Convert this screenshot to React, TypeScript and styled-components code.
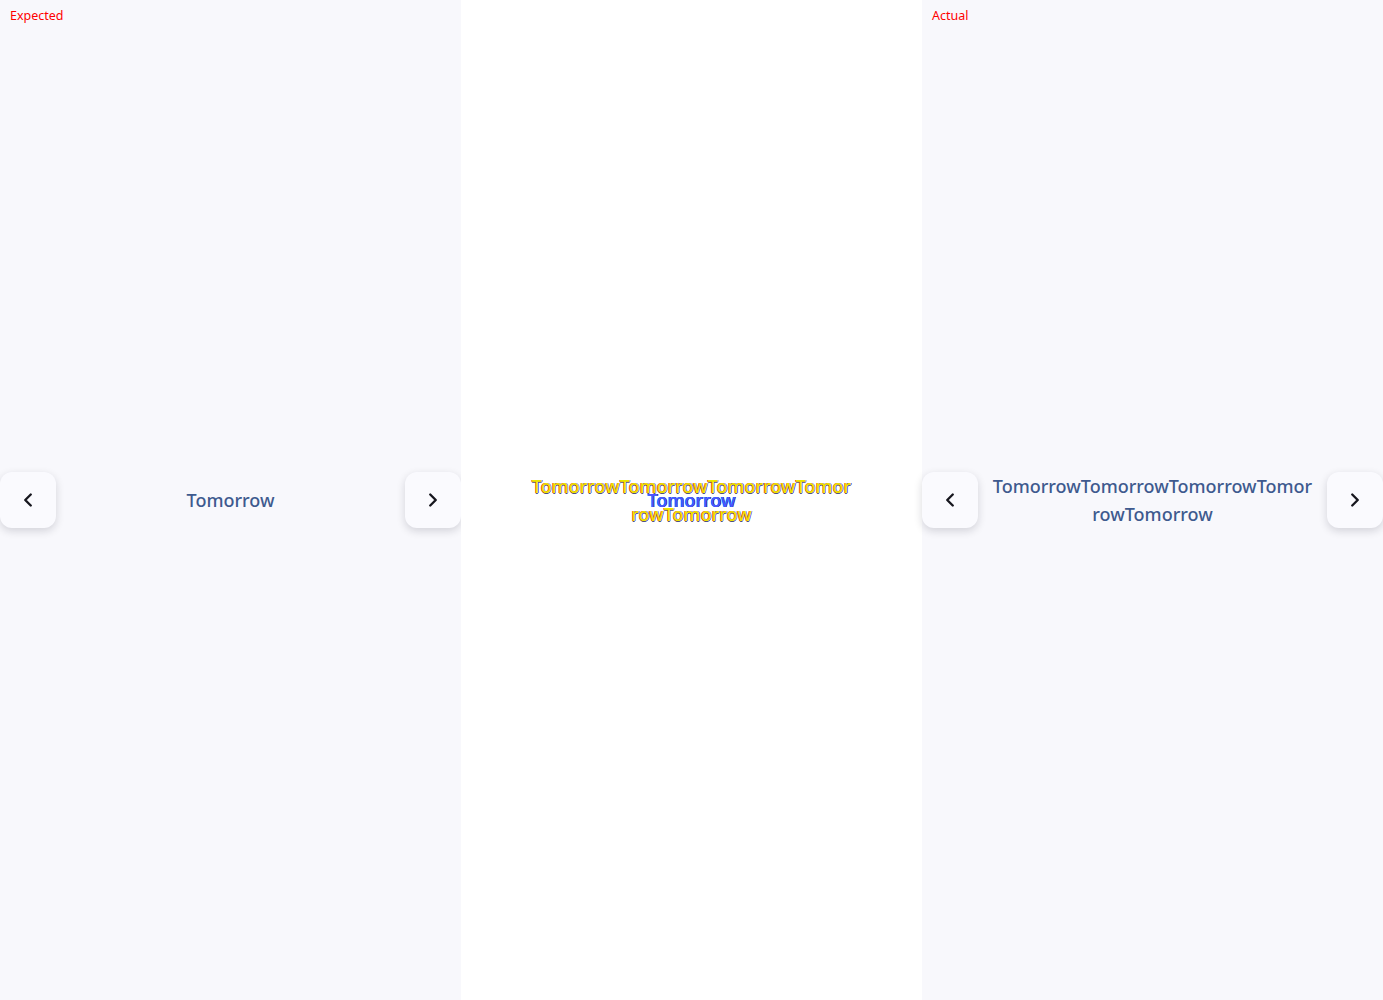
import React from "react";
import styled, { createGlobalStyle } from "styled-components";
import { ChevronLeft, ChevronRight } from "lucide-react";

const Global = createGlobalStyle`
  html, body { margin: 0; padding: 0; }
  body { font-family: "Noto Sans", "DejaVu Sans", sans-serif; background: #ffffff; }
  #root { width: 1383px; height: 1000px; }
`;

const Board = styled.div`
  display: grid;
  grid-template-columns: 461px 461px 461px;
  width: 1383px;
  height: 1000px;
  overflow: hidden;
`;

const Panel = styled.div<{ $tone: "soft" | "white" }>`
  position: relative;
  background: ${(p) => (p.$tone === "soft" ? "#f8f8fc" : "#ffffff")};
  display: flex;
  align-items: center;
  height: 1000px;
`;

const Label = styled.span`
  position: absolute;
  left: 10px;
  top: 7px;
  font-size: 12.5px;
  line-height: 18px;
  color: #ff0000;
`;

const Carousel = styled.div`
  display: flex;
  align-items: center;
  width: 100%;
`;

const NavButton = styled.button`
  flex: 0 0 56px;
  width: 56px;
  height: 56px;
  border: none;
  border-radius: 12px;
  background: #fafafe;
  box-shadow: 0 3px 8px rgba(20, 20, 40, 0.16);
  display: flex;
  align-items: center;
  justify-content: center;
  color: #16161e;
  padding: 0;
`;

const Caption = styled.div`
  flex: 1;
  text-align: center;
  font-size: 18px;
  font-weight: 500;
  line-height: 28px;
  color: #3e5a8e;
  word-break: break-all;
  padding: 0 14px;
  margin-top: -1px;
`;

const DiffArea = styled.div`
  position: relative;
  width: 100%;
  display: flex;
  justify-content: center;
  margin-top: -1px;
`;

const DiffText = styled.div`
  width: 321px;
  text-align: center;
  font-size: 18px;
  font-weight: 500;
  line-height: 28px;
  word-break: break-all;
  color: #e8e800;
  text-shadow: -0.6px 0 0 #ff3030, 0.6px 0 0 #3030ff, 0 0.6px 0 #505080;
`;

const DiffOverlay = styled.div`
  position: absolute;
  left: 0;
  right: 0;
  top: 14px;
  text-align: center;
  font-size: 18px;
  font-weight: 500;
  line-height: 28px;
  color: #5050ff;
  text-shadow: -0.6px 0 0 #00b8ff, 0.6px 0 0 #2020a0;
`;

const word = "Tomorrow";

export default function App() {
  return (
    <>
      <Global />
      <Board>
        <Panel $tone="soft">
          <Label>Expected</Label>
          <Carousel>
            <NavButton><ChevronLeft size={22} strokeWidth={2.6} /></NavButton>
            <Caption>{word}</Caption>
            <NavButton><ChevronRight size={22} strokeWidth={2.6} /></NavButton>
          </Carousel>
        </Panel>
        <Panel $tone="white">
          <DiffArea>
            <DiffText>{word.repeat(5)}</DiffText>
            <DiffOverlay>{word}</DiffOverlay>
          </DiffArea>
        </Panel>
        <Panel $tone="soft">
          <Label>Actual</Label>
          <Carousel>
            <NavButton><ChevronLeft size={22} strokeWidth={2.6} /></NavButton>
            <Caption>{word.repeat(5)}</Caption>
            <NavButton><ChevronRight size={22} strokeWidth={2.6} /></NavButton>
          </Carousel>
        </Panel>
      </Board>
    </>
  );
}
